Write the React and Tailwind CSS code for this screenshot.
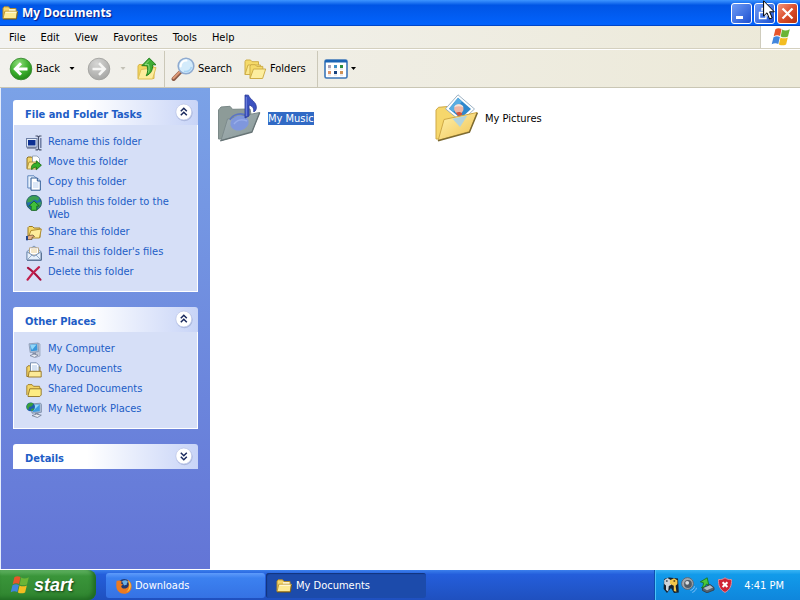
import React from 'react';

/* ---------- logos ---------- */

function WindowsFlag({ className }) {
  return (
    <svg viewBox="0 0 20 20" className={className} aria-hidden="true">
      <path d="M4.4 2.2C6.4 .8 8.6 .9 10.5 2.1L9.1 9C7.1 7.9 5 7.9 2.7 9.3Z" fill="#e8562a" />
      <path d="M11.1 2.6C13.4 3.8 15.7 3.8 18.8 2.3L17 9.4C14.4 10.7 12 10.5 9.7 9.4Z" fill="#6bb536" />
      <path d="M2.5 10.2C4.6 8.9 6.8 8.9 8.9 10L7.3 17C5.2 15.8 3 15.9 .7 17.3Z" fill="#4186dd" />
      <path d="M9.5 10.4C11.8 11.6 14.1 11.6 16.8 10.4L15.1 17.4C12.5 18.7 10.2 18.6 7.9 17.4Z" fill="#f3bd21" />
    </svg>
  );
}

function SmallFolder({ className }) {
  return (
    <svg viewBox="0 0 16 16" className={className} aria-hidden="true">
      <path d="M1 13V3L2.2 1.8H6.5L8 3.5H14V7" fill="#f5d66b" stroke="#b08a2c" strokeWidth="1" />
      <path d="M7 4.2H13.5V7H7Z" fill="#fffbe2" />
      <path d="M1 13.5L2.8 6.2H15.3L14.2 13.5Z" fill="#fdea94" stroke="#c09a38" strokeWidth="1" />
      <path d="M3.6 7.3H14.3" stroke="#fffbe0" />
      <path d="M1 14.2H14.4L15.6 7" fill="none" stroke="#6f571b" strokeWidth=".8" />
    </svg>
  );
}

/* ---------- toolbar icons ---------- */

function BackIcon() {
  return (
    <svg viewBox="0 0 24 24" className="size-6 shrink-0" aria-hidden="true">
      <defs>
        <radialGradient id="backFill" cx=".4" cy=".25" r=".8">
          <stop offset="0" stopColor="#8fdd7b" />
          <stop offset=".55" stopColor="#3db02f" />
          <stop offset="1" stopColor="#1d8413" />
        </radialGradient>
      </defs>
      <circle cx="12" cy="12" r="10.8" fill="url(#backFill)" stroke="#3c8a34" strokeWidth=".9" />
      <path d="M18.5 12H7M12 6.2L6.3 12L12 17.8" fill="none" stroke="#fff" strokeWidth="3" />
    </svg>
  );
}

function ForwardIcon() {
  return (
    <svg viewBox="0 0 24 24" className="size-6 shrink-0" aria-hidden="true">
      <defs>
        <radialGradient id="fwdFill" cx=".4" cy=".25" r=".8">
          <stop offset="0" stopColor="#d6d6d4" />
          <stop offset="1" stopColor="#a4a4a2" />
        </radialGradient>
      </defs>
      <circle cx="12" cy="12" r="10.8" fill="url(#fwdFill)" stroke="#a3a39f" strokeWidth=".9" />
      <path d="M5.5 12H17M12 6.2L17.7 12L12 17.8" fill="none" stroke="#f6f6f4" strokeWidth="2.6" />
    </svg>
  );
}

function UpFolderIcon() {
  return (
    <svg viewBox="0 0 24 24" className="size-6" aria-hidden="true">
      <path d="M3 21.5V9L4 7.5H8L9.5 9H18L19 11V21.5Z" fill="#f3d65f" stroke="#d8b548" />
      <path d="M3 22L6 12.5L21 10.5L17.6 22Z" fill="#fdec9c" stroke="#dfc056" />
      <path d="M6.8 8.7L14.2 1L21 7.8H17.6C17.9 12.5 16.2 16.8 11.2 18.8C13 15.2 13 12.2 12 8.7Z" fill="#3fae35" stroke="#1d7a1a" strokeWidth=".9" />
      <path d="M14.2 3.3L10 7.6H13.6C14.3 10.6 14.3 13.5 13.4 15.6" fill="none" stroke="#9be08a" strokeWidth=".9" />
    </svg>
  );
}

function SearchIcon() {
  return (
    <svg viewBox="0 0 24 24" className="size-6" aria-hidden="true">
      <path d="M9.2 15.2L2.6 22" stroke="#8b5a45" strokeWidth="4" strokeLinecap="round" />
      <path d="M8.8 14.8L2.4 21.2" stroke="#dd9a78" strokeWidth="2" strokeLinecap="round" />
      <circle cx="15" cy="9" r="7.8" fill="#d3ebfb" stroke="#8fabd0" strokeWidth="1.6" />
      <path d="M9.7 9.4A5.4 5.4 0 0 1 15.5 3.6" fill="none" stroke="#fff" strokeWidth="2" strokeLinecap="round" />
      <path d="M20.4 10A5.6 5.6 0 0 1 13 14.2" fill="none" stroke="#a9d4f4" strokeWidth="1.6" />
    </svg>
  );
}

function FoldersIcon() {
  return (
    <svg viewBox="0 0 24 24" className="size-6" aria-hidden="true">
      <path d="M2 17.5V4.5L3 3H7.5L9 4.7H15.5V8" fill="#f5da69" stroke="#cfae48" />
      <path d="M2 17.5L5 8H17.5L15 17.5Z" fill="#fbe88e" stroke="#cfae48" />
      <path d="M7 21.3V9.2L8 7.7H12.2L13.7 9.4H19.8V12" fill="#f5da69" stroke="#cfae48" />
      <path d="M7 21.5L10.5 12H22.7L19.6 21.5Z" fill="#fdee9f" stroke="#cfae48" />
    </svg>
  );
}

function ViewsIcon() {
  return (
    <svg viewBox="0 0 24 20" className="h-5 w-6" aria-hidden="true">
      <rect x="1" y="1" width="22" height="18" rx="1.5" fill="#fff" stroke="#3b76b8" strokeWidth="1.6" />
      <path d="M1 2.5C1 1.5 1.5 1 2.5 1H21.5C22.5 1 23 1.5 23 2.5V3.5H1Z" fill="#1b64b5" />
      <rect x="4" y="6" width="3" height="3" fill="#a9a0b5" />
      <rect x="10" y="6" width="3" height="3" fill="#3e8fc6" />
      <rect x="16" y="6" width="3" height="3" fill="#2c8d3b" />
      <rect x="4" y="12" width="3" height="3" fill="#dd9468" />
      <rect x="10" y="12" width="3" height="3" fill="#16427e" />
      <rect x="16" y="12" width="3" height="3" fill="#cf9256" />
      <path d="M4 10H7M10 10H13M16 10H19M4 16H7M10 16H13M16 16H19" stroke="#d6d6dc" />
    </svg>
  );
}

function DropArrow({ className }) {
  return (
    <svg viewBox="0 0 5 3" className={className} aria-hidden="true">
      <path d="M0 0H5L2.5 3Z" fill="currentColor" />
    </svg>
  );
}

/* ---------- task pane icons ---------- */

const ICON = 'size-4 shrink-0';

const RenameIcon = () => (
  <svg viewBox="0 0 16 16" className={ICON} aria-hidden="true">
    <rect x=".5" y="3.5" width="10.5" height="8.5" fill="#e5edf8" stroke="#6d7fa6" />
    <rect x="2" y="5" width="7.5" height="5.5" fill="#0c2f92" />
    <path d="M1 13H10.5" stroke="#48536e" />
    <path d="M9.5 1H11.5L12.5 2L13.5 1H15.5M9.5 14.8H11.5L12.5 13.8L13.5 14.8H15.5M12.5 2V14" fill="none" stroke="#46506b" strokeWidth="1.2" />
    <path d="M14.8 3V13" stroke="#66759c" strokeWidth="1.4" />
  </svg>
);

const MoveIcon = () => (
  <svg viewBox="0 0 16 16" className={ICON} aria-hidden="true">
    <path d="M1 13.5V3L2 2H5.5L7 3.5H11V13.5Z" fill="#f2d467" stroke="#8c7023" />
    <path d="M6.5 1H11L13.5 3.5V9H6.5Z" fill="#fff" stroke="#8797ad" strokeWidth=".8" />
    <path d="M1 14L3 7H12L10 14Z" fill="#fae894" stroke="#a38430" strokeWidth=".8" />
    <path d="M6 10.5C7 8.7 8.5 8.3 10.3 8.4V5.8L15.4 10.2L10.3 14.8V12.2C8.5 12 7 12.7 5.8 14.6C5.2 13 5.3 11.8 6 10.5Z" fill="#35b02a" stroke="#14640f" strokeWidth=".8" />
  </svg>
);

const CopyIcon = () => (
  <svg viewBox="0 0 16 16" className={ICON} aria-hidden="true">
    <path d="M1.8 .8H8L10 2.8V13H1.8Z" fill="#e7f1fd" stroke="#5f86bd" />
    <path d="M5 3H11.3L14.3 6V15.2H5Z" fill="#fff" stroke="#2f5a94" />
    <path d="M11.3 3V6H14.3" fill="#bdd3f0" stroke="#2f5a94" />
    <path d="M7 8H12.5M7 10H12.5M7 12H12.5" stroke="#b7d0f0" />
  </svg>
);

const PublishIcon = () => (
  <svg viewBox="0 0 16 16" className={ICON} aria-hidden="true">
    <circle cx="8" cy="7.8" r="7.5" fill="#236bb0" stroke="#1c5648" strokeWidth=".8" />
    <path d="M3 2.5C6 .3 11 .4 13.3 3L12 6L8.5 4.5L5 7L1 7.5C1.2 5.5 1.8 3.7 3 2.5ZM10 8L15 7C15 10 13.5 12.5 12 13.5Z" fill="#3c9f52" />
    <path d="M8 6L13.3 11H10.8V15.3H5.2V11H2.7Z" fill="#41c03a" stroke="#13661a" strokeWidth=".8" />
  </svg>
);

const ShareIcon = () => (
  <svg viewBox="0 0 16 16" className={ICON} aria-hidden="true">
    <path d="M2 12.5V2.5L3 1.5H6.5L8 3H14V12.5Z" fill="#f5da6d" stroke="#9c7a24" />
    <path d="M2 13L5 5.5L15.3 4L13.5 13Z" fill="#fdec9b" stroke="#b08c2f" />
    <path d="M0 14.5V12L3.2 10.5L7 10L8.5 11.5L6 12.5V14.5Z" fill="#e9b184" stroke="#5b4526" strokeWidth=".7" />
    <rect x="0" y="11" width="2" height="4.3" fill="#24468f" />
  </svg>
);

const EmailIcon = () => (
  <svg viewBox="0 0 16 16" className={ICON} aria-hidden="true">
    <path d="M1 6.5L8 1L15 6.5V15H1Z" fill="#cddff3" stroke="#7f97b8" />
    <path d="M3.5 2.8H12.5V10H3.5Z" fill="#fff" stroke="#b49b71" strokeWidth=".8" />
    <path d="M5 5H11M5 7H11" stroke="#e9cf95" />
    <path d="M1 6.8L8 11.2L15 6.8V15H1Z" fill="#e7f0fb" stroke="#7690b3" />
    <path d="M1 15L6 10M15 15L10 10" stroke="#93a9c6" />
    <path d="M1 15.3H15.4V8" fill="none" stroke="#566d90" />
  </svg>
);

const DeleteIcon = () => (
  <svg viewBox="0 0 16 16" className={ICON} aria-hidden="true">
    <path d="M2 2.8C6 5.6 10.5 10 14.4 14.6" stroke="#a8123f" strokeWidth="2.2" strokeLinecap="round" fill="none" />
    <path d="M13 2.2C9.2 5.4 4.8 10.2 1.6 14.6" stroke="#c21f4c" strokeWidth="2.2" strokeLinecap="round" fill="none" />
  </svg>
);

const ComputerIcon = () => (
  <svg viewBox="0 0 16 16" className={ICON} aria-hidden="true">
    <path d="M12 1L14 2V14L9.5 15.5V11Z" fill="#c3cad9" stroke="#9aa5bc" strokeWidth=".8" />
    <path d="M3 1.8L12 1L12.6 9.6L4.2 10.6Z" fill="#b4c3d8" stroke="#8595b0" strokeWidth=".8" />
    <path d="M4 2.8L11 2.1L11.4 8.6L5 9.3Z" fill="#3797dc" />
    <path d="M4.2 3L10.6 2.4L6 8Z" fill="#8fd6f8" />
    <path d="M6.5 10.5H10V12.8H6.5Z" fill="#8490a8" />
    <path d="M4 13.6L8 12L12 13.2L8.6 15.4Z" fill="#e6e9f0" stroke="#77839b" strokeWidth=".8" />
  </svg>
);

const DocumentsIcon = () => (
  <svg viewBox="0 0 16 16" className={ICON} aria-hidden="true">
    <path d="M.8 14.5V5L2 3.8H5L6 5H14V14.5Z" fill="#f3d566" stroke="#947323" strokeWidth=".9" />
    <path d="M4.5 .8H10.5L13 3.3V10H4.5Z" fill="#fff" stroke="#6e87aa" strokeWidth=".9" />
    <path d="M6 4H11M6 6H11.5M6 8H11.5" stroke="#9fbde3" strokeWidth=".9" />
    <path d="M3.2 9.3H15.2V15H2.2Z" fill="#fcea98" stroke="#947323" strokeWidth=".9" />
  </svg>
);

const SharedFolderIcon = () => (
  <svg viewBox="0 0 16 16" className={ICON} aria-hidden="true">
    <path d="M.8 13V3.8L2 2.6H6L7.5 4.3H13.5L14.2 7" fill="#f3d566" stroke="#9c7c28" strokeWidth=".9" />
    <path d="M2 13.8L3.8 6.8H15.2V13L13.8 14.5H2Z" fill="#fdec83" stroke="#8f7223" strokeWidth=".9" />
  </svg>
);

const NetworkIcon = () => (
  <svg viewBox="0 0 16 16" className={ICON} aria-hidden="true">
    <path d="M5 2L14.6 1.2L15.4 2.4V10.3L6 11.2Z" fill="#aebfd6" stroke="#7788a3" strokeWidth=".8" />
    <path d="M6 3L13.8 2.3V9.2L7 9.9Z" fill="#3b9ce2" />
    <path d="M7 3.3L13.3 2.7L7.6 8.6Z" fill="#97dbfa" />
    <path d="M9 11H12.5V13H9Z" fill="#8490a8" />
    <path d="M6 13.6L10.5 12L15.3 13.2L11.4 15.5Z" fill="#e6e9f0" stroke="#6d7a93" strokeWidth=".8" />
    <circle cx="4.6" cy="4.8" r="4.4" fill="#1f5dac" />
    <path d="M1 3.2C2.5 .7 5.5 .1 7.6 1.8L5.6 4.3L3 4.9L2.5 7.8C.8 7 .1 4.9 1 3.2ZM5 7L8.2 6.3C8 8 6.5 9.2 5.4 9.1Z" fill="#38a03c" />
  </svg>
);

/* ---------- content icons ---------- */

function MusicFolderIcon() {
  return (
    <svg viewBox="0 0 48 48" className="size-12 shrink-0" aria-hidden="true">
      <defs>
        <linearGradient id="musicFront" x1="0" y1="0" x2="1" y2="1">
          <stop offset="0" stopColor="#a3b0b4" />
          <stop offset="1" stopColor="#8a9a98" />
        </linearGradient>
      </defs>
      <path d="M4.5 45V16L7 13L16 12.3L18.5 15.3L36 15L37 20L7 45Z" fill="#8d9b98" stroke="#7b8988" />
      <path d="M7 46.5L13.5 25L45.5 18.5L38 37.5Z" fill="url(#musicFront)" stroke="#7d8b8c" />
      <path d="M6.2 46.8L37.9 38.2L45.8 18.5" fill="none" stroke="#667375" strokeWidth="1.2" />
      <ellipse cx="25.5" cy="29" rx="9.3" ry="7.4" fill="#7f97dd" transform="rotate(-14 25.5 29)" />
      <path d="M16 26C18.5 20 28 18 32 22" fill="none" stroke="#5a74c6" strokeWidth="1.6" />
      <path d="M20 30C23 26 28 25 33 27" fill="none" stroke="#98adea" strokeWidth="1.4" />
      <path d="M31 24V1L34.5 1.2C36 6 43 7.5 42.3 14.5C41.7 17 40.5 18 39.5 17.5C40.5 14.5 38 11.7 35 11V22Z" fill="#3c52c0" stroke="#273795" strokeWidth=".8" />
      <path d="M32.3 3V22" stroke="#7b8de2" strokeWidth=".9" />
    </svg>
  );
}

function PicturesFolderIcon() {
  return (
    <svg viewBox="0 0 48 48" className="size-12 shrink-0" aria-hidden="true">
      <defs>
        <linearGradient id="picFront" x1="0" y1="0" x2="1" y2="1">
          <stop offset="0" stopColor="#fff3ae" />
          <stop offset="1" stopColor="#f0c252" />
        </linearGradient>
      </defs>
      <path d="M5 45V16L7.5 13.3L16 12.6L18.5 15.3L37 15L38 20L8 45Z" fill="#f6d76c" stroke="#cfa947" />
      <path d="M27 .8L43.5 15L30 27.5L14.5 14.8Z" fill="#fdfefe" stroke="#93a9bd" strokeWidth=".9" />
      <path d="M27 3.8L40 15L29.8 24.4L18 14.7Z" fill="#2d87cd" />
      <path d="M27 3.8L31 7.5L22 18L18 14.7Z" fill="#58ade2" />
      <circle cx="27.8" cy="15" r="4.7" fill="#efb6a5" />
      <path d="M23 13.5C23.6 9 32 9 32.6 13.5C29.7 11.8 26 11.8 23 13.5Z" fill="#f4e4da" />
      <path d="M25 18.8C27 17.4 30 17.6 31.4 19.5L29.5 23L26.5 21.2Z" fill="#d2543d" />
      <path d="M7.2 46.3L13 25.5L46 18.5L38.5 37.5Z" fill="url(#picFront)" stroke="#cfa947" />
      <path d="M21.5 24.8L36.5 21.6L29 33Z" fill="#a9d2e8" opacity=".9" />
      <path d="M7 46.8L38.4 38.2L46.4 18.7" fill="none" stroke="#7c6a31" strokeWidth="1.5" />
    </svg>
  );
}

/* ---------- tray icons ---------- */

const KeysIcon = () => (
  <svg viewBox="0 0 16 16" className={ICON} aria-hidden="true">
    <path d="M1 2L6 .5L15 1.5L15.8 15.5L11 16L8 11L4 16L.6 12Z" fill="#17222e" />
    <path d="M1.2 3L4.5 1L8 3.2V8L5.8 9L5.2 14.5L3 13V8.5L1.2 7Z" fill="#cfd4da" />
    <circle cx="3.8" cy="3.9" r="1" fill="#525c66" />
    <path d="M7 3.2L11 1.2L14.4 3.2V7L12.6 8.8L13.4 14.8L10.8 14V8.8L7 7Z" fill="#f3c64a" />
    <circle cx="11.3" cy="3.9" r="1" fill="#70541a" />
  </svg>
);

const SpeakerIcon = () => (
  <svg viewBox="0 0 16 16" className={ICON} aria-hidden="true">
    <circle cx="6.5" cy="6.5" r="5.9" fill="#a2a8ae" stroke="#596470" strokeWidth=".9" />
    <circle cx="7" cy="7" r="3.9" fill="#515b66" />
    <circle cx="6.2" cy="5.8" r="1.9" fill="#d9dee2" />
    <path d="M9.5 13.5C11.5 12.8 13 11.5 13.5 9.3M11.3 15.4C13.5 14.6 15 13 15.5 10.8" fill="none" stroke="#8cc6fb" strokeWidth=".9" />
  </svg>
);

const RemoveHardwareIcon = () => (
  <svg viewBox="0 0 16 16" className={ICON} aria-hidden="true">
    <path d="M3.5 11L11 7.5L15 10.5V13L8 15.8L3.5 13.5Z" fill="#56616d" stroke="#303b45" strokeWidth=".8" />
    <path d="M4.5 11L11 8.2L14 10.4L8 13.3Z" fill="#b5bec6" />
    <path d="M1.3 4.8L8.2 .8L9.8 8L7.5 7C6.6 9.2 5 10.4 2.4 10.8C4 9.3 4.6 7.8 4.4 5.7Z" fill="#49c73b" stroke="#16701a" strokeWidth=".8" />
  </svg>
);

const ShieldIcon = () => (
  <svg viewBox="0 0 16 16" className={ICON} aria-hidden="true">
    <path d="M8 .8C10 2.3 12 2.8 14.4 2.5C14.9 8.5 13 12.8 8 15.4C3 12.8 1.1 8.5 1.6 2.5C4 2.8 6 2.3 8 .8Z" fill="#cf2335" stroke="#dd8f9c" strokeWidth="1" />
    <path d="M5.6 5.2L10.4 10M10.4 5.2L5.6 10" stroke="#fff" strokeWidth="2" />
  </svg>
);

const FirefoxIcon = () => (
  <svg viewBox="0 0 16 16" className={ICON} aria-hidden="true">
    <circle cx="8.2" cy="7.4" r="6.4" fill="#1f3974" />
    <path d="M6 3.2C8 1.6 11 2 12.3 4.2C11 4 10.5 5 11 6.5L8 7.6Z" fill="#6fb0e2" />
    <path d="M.8 2.2C1.2 2.9 1.8 3 2.5 2.6C3.6 2.4 4.9 2.7 5.8 3.6L5 5.4L7 6.6L5.2 8C5.2 10 7.3 11 9.5 10.4C12.2 9.8 13.2 7.6 12.6 5C12.4 3.5 11.8 2.3 11 1.2C14.2 2.8 15.8 5.6 15.6 9C15.2 13 12.2 15.8 8 15.8C3.8 15.8 .4 12.6 .3 8.3C.2 6 .3 4 .8 2.2Z" fill="#ec7a20" />
    <path d="M12.2 2.5C14.2 4 15.2 6.5 14.6 9.3C14 11.7 12.5 13.3 10.4 14C13.2 11.5 14 8 12.8 5Z" fill="#fac746" />
  </svg>
);

/* ---------- data ---------- */

const menus = ['File', 'Edit', 'View', 'Favorites', 'Tools', 'Help'];

const tasks = [
  ['Rename this folder', RenameIcon],
  ['Move this folder', MoveIcon],
  ['Copy this folder', CopyIcon],
  ['Publish this folder to the Web', PublishIcon],
  ['Share this folder', ShareIcon],
  ["E-mail this folder's files", EmailIcon],
  ['Delete this folder', DeleteIcon],
];

const places = [
  ['My Computer', ComputerIcon],
  ['My Documents', DocumentsIcon],
  ['Shared Documents', SharedFolderIcon],
  ['My Network Places', NetworkIcon],
];

/* ---------- pieces ---------- */

function Panel({ title, items }) {
  return (
    <section>
      <h2 className="flex h-[25px] items-center justify-between rounded-t-[3px] bg-linear-to-r from-white from-40% to-[#c8d4f7] pr-1 pl-3 font-bold text-[#215dc6]">
        <span className="pt-1">{title}</span>
        <button
          type="button"
          aria-label={(items ? 'Collapse ' : 'Expand ') + title}
          className="flex size-5 items-center justify-center"
        >
          <svg viewBox="0 0 20 20" className="size-5" aria-hidden="true">
            <circle cx="10.3" cy="9.8" r="8.4" fill="#a9b6dc" />
            <circle cx="9.8" cy="9" r="8" fill="#fff" stroke="#bcc7e8" strokeWidth=".8" />
            {items ? (
              <path d="M6.8 8.2L9.8 5.2L12.8 8.2M6.8 12.2L9.8 9.2L12.8 12.2" fill="none" stroke="#18285c" strokeWidth="1.5" />
            ) : (
              <path d="M6.8 5.7L9.8 8.7L12.8 5.7M6.8 9.7L9.8 12.7L12.8 9.7" fill="none" stroke="#18285c" strokeWidth="1.5" />
            )}
          </svg>
        </button>
      </h2>
      {items && (
        <ul className="flex flex-col gap-1 border border-t-0 border-white bg-[#d6dff7] px-3 py-2.5">
          {items.map(([label, Icon]) => (
            <li key={label}>
              <a href="#" className="flex items-start gap-1.5 text-[#215dc6]">
                <Icon />
                <span>{label}</span>
              </a>
            </li>
          ))}
        </ul>
      )}
    </section>
  );
}

const CAPTION = 'flex size-[21px] items-center justify-center rounded-[3px] border border-white';

export default function App() {
  return (
    <div className="flex min-h-screen flex-col bg-white font-['DejaVu_Sans_Condensed','DejaVu_Sans',sans-serif] text-[11px] leading-[13px] text-black">
      {/* title bar */}
      <header className="relative flex h-[26px] shrink-0 items-center gap-1 bg-linear-to-b from-[#3d95ff] via-[#0055e5] via-20% to-[#0262fb] to-90% px-0.5 shadow-[inset_0_-1px_0_#0046c8]">
        <SmallFolder className="size-4" />
        <h1 className="flex-1 font-['Open_Sans',sans-serif] text-[12px] leading-4 font-bold text-white [text-shadow:1px_1px_1px_#0a1883]">
          My Documents
        </h1>
        <div className="flex gap-0.5">
          <button type="button" aria-label="Minimize" className={`${CAPTION} bg-linear-to-br from-[#6f9bf5] to-[#1d4fd0]`}>
            <svg viewBox="0 0 19 19" className="size-[19px]" aria-hidden="true">
              <rect x="4" y="12" width="7" height="3" fill="#fff" />
            </svg>
          </button>
          <button type="button" aria-label="Restore" className={`${CAPTION} bg-linear-to-br from-[#6f9bf5] to-[#1d4fd0]`}>
            <svg viewBox="0 0 19 19" className="size-[19px]" aria-hidden="true">
              <path d="M7 7V4.5H14.5V11.5H12M4.5 8.5H11V14.5H4.5Z" fill="none" stroke="#fff" strokeWidth="1.4" />
            </svg>
          </button>
          <button type="button" aria-label="Close" className={`${CAPTION} bg-linear-to-br from-[#f0937a] via-[#dc4f2c] to-[#b5310f]`}>
            <svg viewBox="0 0 19 19" className="size-[19px]" aria-hidden="true">
              <path d="M4.5 4.5L14.5 14.5M14.5 4.5L4.5 14.5" stroke="#fff" strokeWidth="2.2" />
            </svg>
          </button>
        </div>
        {/* mouse pointer */}
        <svg viewBox="0 0 12 20" className="absolute top-0 right-[25px] h-5 w-3" aria-hidden="true">
          <path d="M.6 .8V16L4 12.8L6.6 19L9.2 17.8L6.6 11.8H11.3Z" fill="#fff" stroke="#000" strokeWidth="1" />
        </svg>
      </header>

      {/* menu bar */}
      <nav className="flex h-[23px] shrink-0 items-stretch justify-between border-b border-[#d4d0bf] bg-linear-to-r from-[#f3f3f1] to-[#ece9d8]">
        <div className="flex items-center gap-[15px] pl-[9px]">
          {menus.map((m) => (
            <button key={m} type="button">
              {m}
            </button>
          ))}
        </div>
        <div className="flex w-10 items-center justify-center border-l border-[#cfccbd] bg-white">
          <WindowsFlag className="size-5" />
        </div>
      </nav>

      {/* toolbar */}
      <div className="flex h-[39px] shrink-0 items-center border-t border-b border-t-white border-b-[#c9c6b4] bg-linear-to-r from-[#f2f1ed] to-[#ece9d8] pl-[9px]">
        <button type="button" className="flex items-center gap-[3px]">
          <BackIcon />
          Back
        </button>
        <button type="button" aria-label="Back history" className="flex w-6 justify-center">
          <DropArrow className="h-[3px] w-[6px]" />
        </button>
        <div className="w-[3px]" />
        <button type="button" aria-label="Forward" disabled>
          <ForwardIcon />
        </button>
        <button type="button" aria-label="Forward history" disabled className="flex w-6 justify-center text-[#c3c1b6]">
          <DropArrow className="h-[3px] w-[6px]" />
        </button>
        <button type="button" aria-label="Up">
          <UpFolderIcon />
        </button>
        <div className="mr-1.5 ml-[5px] h-9 w-px bg-[#cbc8b8]" />
        <button type="button" className="flex items-center gap-[3px]">
          <SearchIcon />
          Search
        </button>
        <button type="button" className="ml-[11px] flex items-center gap-[3px]">
          <FoldersIcon />
          Folders
        </button>
        <div className="mr-1.5 ml-[11px] h-9 w-px bg-[#cbc8b8]" />
        <button type="button" aria-label="Views" className="flex items-center gap-[3px]">
          <ViewsIcon />
          <DropArrow className="h-[3px] w-[5px]" />
        </button>
      </div>

      {/* body */}
      <div className="flex flex-1 border-l border-[#e4ecfb]">
        <aside className="flex w-[209px] shrink-0 flex-col gap-[15px] bg-linear-to-b from-[#7ba2e7] to-[#6375d6] p-3">
          <Panel title="File and Folder Tasks" items={tasks} />
          <Panel title="Other Places" items={places} />
          <Panel title="Details" />
        </aside>
        <main className="grid flex-1 auto-rows-max grid-cols-[repeat(auto-fill,217px)] bg-white pt-1.5 pl-1">
          <a href="#" className="flex items-center gap-1.5">
            <MusicFolderIcon />
            <span className="bg-[#316ac5] text-white">My Music</span>
          </a>
          <a href="#" className="flex items-center gap-1.5">
            <PicturesFolderIcon />
            <span>My Pictures</span>
          </a>
        </main>
      </div>

      {/* taskbar */}
      <footer className="flex h-[31px] shrink-0 items-stretch border-t border-white bg-linear-to-b from-[#3b7fec] via-[#245edb] via-15% to-[#1f50bf]">
        <button
          type="button"
          className="mr-2.5 flex w-24 items-center gap-1 rounded-r-lg bg-linear-to-b from-[#63b565] via-[#3a953a] via-20% to-[#2f842f] pl-2.5 shadow-[inset_-3px_-2px_4px_#1f6a22]"
        >
          <WindowsFlag className="size-5" />
          <span className="font-['Liberation_Sans',sans-serif] text-[18px] leading-5 font-bold text-white italic [text-shadow:1px_1px_2px_#143f14]">
            start
          </span>
        </button>
        <button
          type="button"
          className="mt-[3px] mb-0.5 flex w-[159px] items-center gap-[3px] rounded-[3px] bg-linear-to-b from-[#5e9bfb] via-[#3c81f0] via-20% to-[#3572e4] pl-2.5 text-white"
        >
          <FirefoxIcon />
          Downloads
        </button>
        <button
          type="button"
          className="mt-[3px] mb-0.5 ml-px flex w-40 items-center gap-1 rounded-[3px] bg-[#1c4bab] pl-2.5 text-white shadow-[inset_1px_1px_1px_#12337c]"
        >
          <SmallFolder className="size-4" />
          My Documents
        </button>
        <div className="ml-auto flex w-[146px] items-center gap-0.5 border-l border-[#0d4fae] bg-linear-to-b from-[#36b4f4] via-[#129bea] via-15% to-[#0f86dc] pl-2 text-white shadow-[inset_1px_0_0_#4cc3f8]">
          <KeysIcon />
          <SpeakerIcon />
          <RemoveHardwareIcon />
          <ShieldIcon />
          <time className="ml-auto pr-4">4:41 PM</time>
        </div>
      </footer>
    </div>
  );
}
